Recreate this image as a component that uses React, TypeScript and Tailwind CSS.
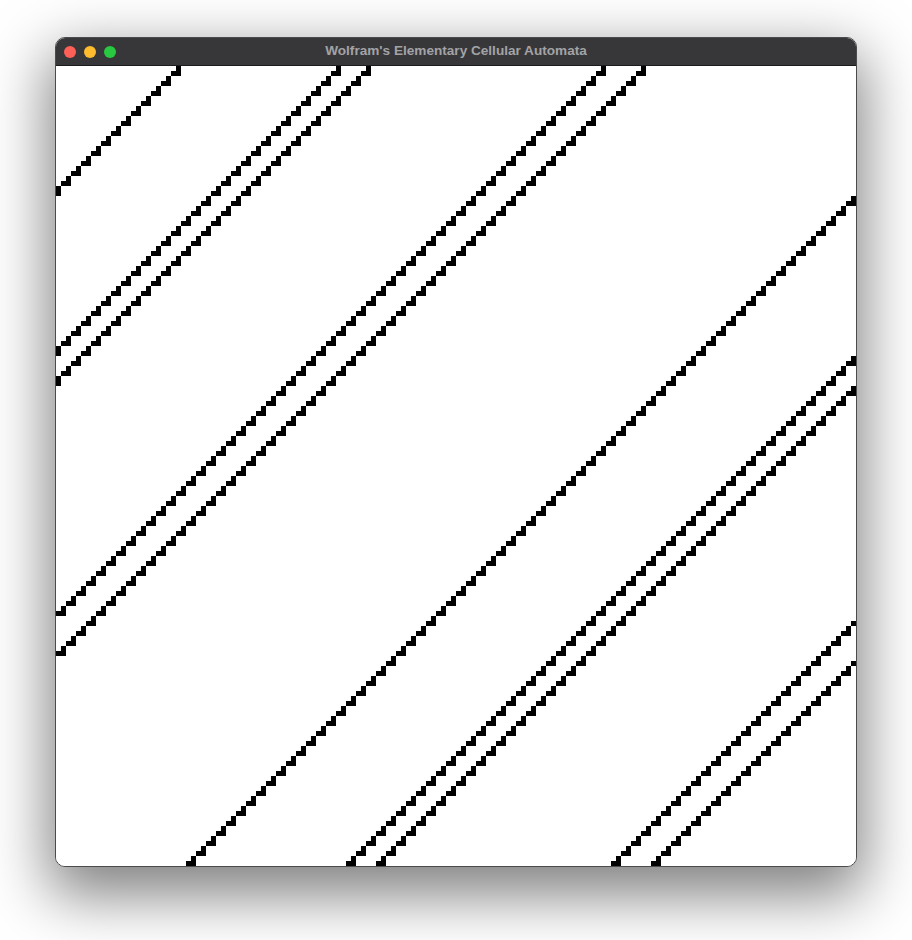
import { useMemo } from "react";

// grid is one column wider than the canvas; the last column is clipped
const COLS = 161;
const ROWS = 160;
const CELL = 5;
// column of the single cell in row 0 for each glider line
const STARTS = [24, 56, 62, 109, 117];

function buildPath() {
  let d = "";
  for (const n of STARTS) {
    for (let r = 0; r < ROWS; r++) {
      const cols = r % 2 === 0 ? [n - r] : [n - r, n - r + 1];
      for (const c of cols) {
        const x = ((c % COLS) + COLS) % COLS;
        d += `M${x * CELL} ${r * CELL}h${CELL}v${CELL}h-${CELL}z`;
      }
    }
  }
  return d;
}

function TrafficLights() {
  return (
    <div className="flex items-center gap-2 pl-2">
      <span className="block h-3 w-3 rounded-full bg-[#fe5f57]" />
      <span className="block h-3 w-3 rounded-full bg-[#febc2e]" />
      <span className="block h-3 w-3 rounded-full bg-[#28c840]" />
    </div>
  );
}

export default function App() {
  const path = useMemo(buildPath, []);

  return (
    <div className="flex h-[940px] w-[912px] justify-center bg-white pt-[37px]">
      <div className="h-fit w-[802px] overflow-hidden rounded-[10px] border border-[#4b4b4d] bg-white shadow-[0_22px_60px_6px_rgba(0,0,0,0.5)]">
        <div className="relative flex h-[28px] items-center border-b border-[#1c1c1e] bg-[#37373a]">
          <TrafficLights />
          <div
            className="absolute inset-0 flex items-center justify-center text-[13.6px] font-bold text-[#a3a3a6]"
            style={{ fontFamily: '"Liberation Sans", Arial, sans-serif' }}
          >
            Wolfram's Elementary Cellular Automata
          </div>
        </div>
        <svg
          width={800}
          height={800}
          viewBox="0 0 800 800"
          className="block"
          shapeRendering="crispEdges"
        >
          <rect width={800} height={800} fill="#ffffff" />
          <path d={path} fill="#000000" />
        </svg>
      </div>
    </div>
  );
}
